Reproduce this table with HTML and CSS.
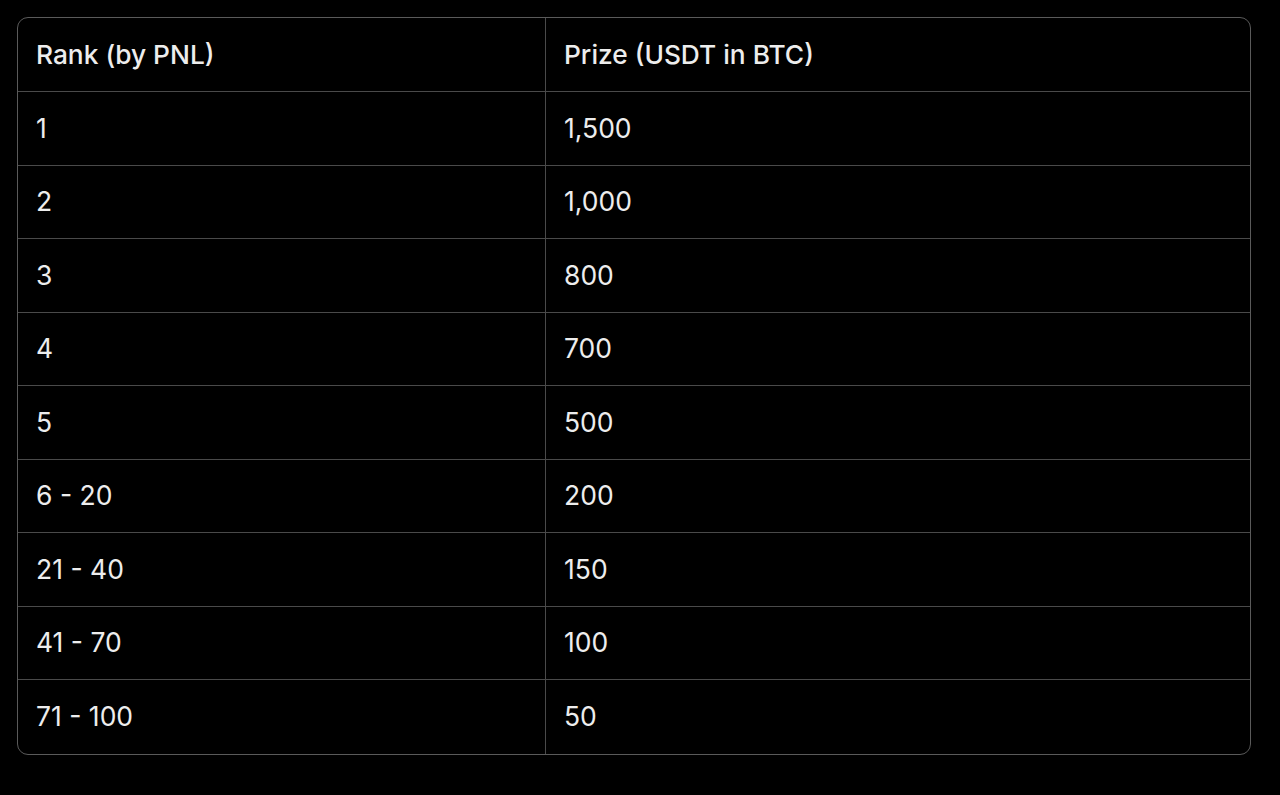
FILE: index.html
```html
<!DOCTYPE html>
<html>
<head>
<meta charset="utf-8">
<link rel="stylesheet" href="styles.css">
</head>
<body>
<div class="page">
  <div class="table-wrap">
    <table class="prize-table">
      <thead>
        <tr><th>Rank (by PNL)</th><th>Prize (USDT in BTC)</th></tr>
      </thead>
      <tbody>
        <tr><td>1</td><td>1,500</td></tr>
        <tr><td>2</td><td>1,000</td></tr>
        <tr><td>3</td><td>800</td></tr>
        <tr><td>4</td><td>700</td></tr>
        <tr><td>5</td><td>500</td></tr>
        <tr><td>6 - 20</td><td>200</td></tr>
        <tr><td>21 - 40</td><td>150</td></tr>
        <tr><td>41 - 70</td><td>100</td></tr>
        <tr><td>71 - 100</td><td>50</td></tr>
      </tbody>
    </table>
  </div>
</div>
</body>
</html>
```
FILE: styles.css
```css
html, body {
  margin: 0;
  padding: 0;
  background: #000;
}
.page {
  padding: 17px 29px 0 17px;
  height: 795px;
  box-sizing: border-box;
}
.table-wrap {
  width: 1234px;
  border: 1.5px solid #5a5a5a;
  border-radius: 11px;
  overflow: hidden;
  box-sizing: border-box;
}
.prize-table {
  width: 100%;
  border-collapse: separate;
  border-spacing: 0;
  font-family: Inter, "Noto Sans", sans-serif;
  font-size: 26.5px;
  color: #ededed;
  table-layout: fixed;
}
.prize-table th,
.prize-table td {
  height: 73.5px;
  padding: 0 0 1px 18px;
  text-align: left;
  vertical-align: middle;
  border-bottom: 1.5px solid #4a4a4a;
  box-sizing: border-box;
}
.prize-table th {
  font-weight: 500;
  font-size: 26.3px;
  height: 74px;
  padding-bottom: 0;
}
.prize-table th:first-child,
.prize-table td:first-child {
  width: 528px;
  border-right: 1.5px solid #4a4a4a;
}
.prize-table tbody tr:last-child td {
  border-bottom: none;
}
```
